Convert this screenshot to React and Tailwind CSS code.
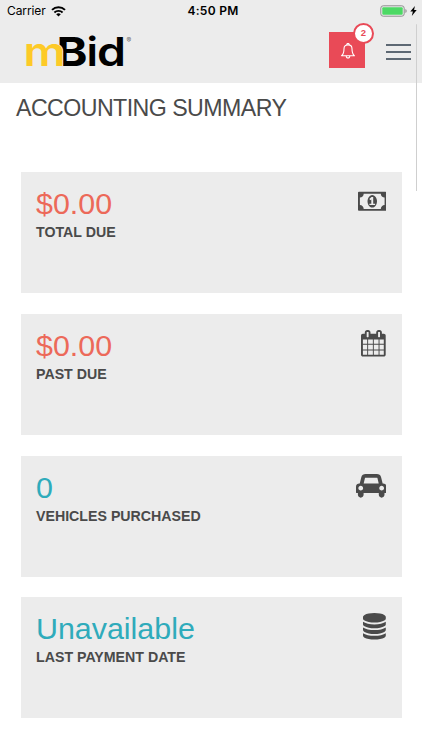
import React from "react";

const icons = {
  money: {
    viewBox: "0 0 1920 1792",
    size: "w-[28.5px] h-[26.6px]",
    path: "M768 1152h384v-96h-128v-448h-114l-148 137 77 80q42-37 55-57h2v288h-128v96zm512-256q0 70-21 142t-59.5 134-101.5 101-138 39-138-39-101.5-101-59.5-134-21-142 21-142 59.5-134 101.5-101 138-39 138 39 101.5 101 59.5 134 21 142zm512 256v-512q-106 0-181-75t-75-181h-1152q0 106-75 181t-181 75v512q106 0 181 75t75 181h1152q0-106 75-181t181-75zm128-832v1152q0 26-19 45t-45 19h-1792q-26 0-45-19t-19-45v-1152q0-26 19-45t45-19h1792q26 0 45 19t19 45z",
  },
  calendar: {
    viewBox: "64 0 1664 1792",
    size: "w-[24.7px] h-[26.6px]",
    path: "M192 1664h288v-288h-288v288zm352 0h320v-288h-320v288zm-352-352h288v-320h-288v320zm352 0h320v-320h-320v320zm-352-384h288v-288h-288v288zm736 736h320v-288h-320v288zm-384-736h320v-288h-320v288zm768 736h288v-288h-288v288zm-384-352h320v-320h-320v320zm-352-864v-288q0-13-9.5-22.5t-22.5-9.5h-64q-13 0-22.5 9.5t-9.5 22.5v288q0 13 9.5 22.5t22.5 9.5h64q13 0 22.5-9.5t9.5-22.5zm736 864h288v-320h-288v320zm-384-384h320v-288h-320v288zm384 0h288v-288h-288v288zm32-480v-288q0-13-9.5-22.5t-22.5-9.5h-64q-13 0-22.5 9.5t-9.5 22.5v288q0 13 9.5 22.5t22.5 9.5h64q13 0 22.5-9.5t9.5-22.5zm384-64v1280q0 52-38 90t-90 38h-1408q-52 0-90-38t-38-90v-1280q0-52 38-90t90-38h128v-96q0-66 47-113t113-47h64q66 0 113 47t47 113v96h384v-96q0-66 47-113t113-47h64q66 0 113 47t47 113v96h128q52 0 90 38t38 90z",
  },
  car: {
    viewBox: "0 0 2048 1792",
    size: "w-[30.4px] h-[26.6px]",
    path: "M480 1088q0-66-47-113t-113-47-113 47-47 113 47 113 113 47 113-47 47-113zm36-320h1016l-89-357q-2-8-14-17.5t-21-9.5h-768q-9 0-21 9.5t-14 17.5zm1372 320q0-66-47-113t-113-47-113 47-47 113 47 113 113 47 113-47 47-113zm160-96v384q0 14-9 23t-23 9h-96v128q0 80-56 136t-136 56-136-56-56-136v-128h-1024v128q0 80-56 136t-136 56-136-56-56-136v-128h-96q-14 0-23-9t-9-23v-384q0-93 65.5-158.5t158.5-65.5h28l105-419q23-94 104-157.5t179-63.5h768q98 0 179 63.5t104 157.5l105 419h28q93 0 158.5 65.5t65.5 158.5z",
  },
  database: {
    viewBox: "128 0 1536 1792",
    size: "w-[22.8px] h-[26.6px]",
    path: "M896 768q237 0 443-43t325-127v170q0 69-103 128t-280 93.5-385 34.5-385-34.5-280-93.5-103-128v-170q119 84 325 127t443 43zm0 768q237 0 443-43t325-127v170q0 69-103 128t-280 93.5-385 34.5-385-34.5-280-93.5-103-128v-170q119 84 325 127t443 43zm0-384q237 0 443-43t325-127v170q0 69-103 128t-280 93.5-385 34.5-385-34.5-280-93.5-103-128v-170q119 84 325 127t443 43zm0-1152q208 0 385 34.5t280 93.5 103 128v128q0 69-103 128t-280 93.5-385 34.5-385-34.5-280-93.5-103-128v-128q0-69 103-128t280-93.5 385-34.5z",
  },
};

const cards = [
  { value: "$0.00", label: "TOTAL DUE", icon: "money", color: "text-[#ec6959]" },
  { value: "$0.00", label: "PAST DUE", icon: "calendar", color: "text-[#ec6959]" },
  { value: "0", label: "VEHICLES PURCHASED", icon: "car", color: "text-[#2fabbb]" },
  { value: "Unavailable", label: "LAST PAYMENT DATE", icon: "database", color: "text-[#2fabbb]" },
];

const StatusBar = () => (
  <div className="grid grid-cols-3 items-center h-[22px] pl-[7px] pr-[5px] font-['Inter'] text-black">
    <div className="flex items-center gap-[5px]">
      <span className="text-[12px] leading-[22px] tracking-[-0.1px]">Carrier</span>
      <svg className="w-[15px] h-[11px]" viewBox="0 0 15 11" fill="none" stroke="currentColor">
        <path d="M1 3.9a9.3 9.3 0 0 1 13 0" strokeWidth="2" />
        <path d="M3.4 6.5a5.9 5.9 0 0 1 8.2 0" strokeWidth="1.9" />
        <path d="M7.5 10.6 5.2 8.3a3.3 3.3 0 0 1 4.6 0z" fill="currentColor" stroke="none" />
      </svg>
    </div>
    <span className="pl-[2px] text-center text-[12px] leading-[22px] font-semibold tracking-[0.3px]">4:50 PM</span>
    <div className="flex items-center justify-end gap-[3px]">
      <svg className="w-[27px] h-[12px]" viewBox="0 0 27 12">
        <rect x="0.8" y="0.8" width="23.4" height="10.4" rx="2.4" fill="none" stroke="#8f8f8f" />
        <rect x="2.3" y="2.2" width="20.4" height="7.6" rx="1" fill="#4cd964" />
        <path d="M25.4 4v4q1.3-.6 1.3-2t-1.3-2z" fill="#8f8f8f" />
      </svg>
      <svg className="w-[7px] h-[10px]" viewBox="0 0 7 10">
        <path d="M4.9 0 .3 5.6h2.6L1.8 10l4.9-5.9H4.1z" fill="#000" />
      </svg>
    </div>
  </div>
);

const Logo = () => (
  <svg className="w-[110px] h-[36px] overflow-visible" viewBox="24 34 110 36" fontFamily="Inter, sans-serif" fontWeight="600" fontSize="40">
    <text x="56.5" y="66" fontWeight="700" textLength="31" lengthAdjust="spacingAndGlyphs">B</text>
    {/* The m sits over the B, separated by a thin gap */}
    <text x="23.5" y="66" fill="#fdca27" stroke="#ececec" strokeWidth="1.2" paintOrder="stroke" textLength="42" lengthAdjust="spacingAndGlyphs">m</text>
    <text x="86.5" y="66" textLength="11.5" lengthAdjust="spacingAndGlyphs">i</text>
    <text x="97" y="66" textLength="29" lengthAdjust="spacingAndGlyphs">d</text>
    <text x="126.5" y="42.5" fontSize="7" fontWeight="400" fill="#666">®</text>
  </svg>
);

const Header = () => (
  <header className="h-[83px] bg-[#ececec]">
    <StatusBar />
    <div className="flex pl-6 pr-[11px] pt-3">
      <Logo />
      <div className="relative ml-auto mt-[-2px] flex h-9 w-9 items-center justify-center bg-[#e94a57]">
        <svg className="mt-px ml-[2px] w-[14px] h-[16px]" viewBox="0 0 14 16" fill="none" stroke="#fff" strokeWidth="1.1" strokeLinejoin="round">
          <path d="M5.9 1.9a1.15 1.15 0 1 1 2.2 0" />
          <path d="M7 1.9C4.4 1.9 3 3.5 3 5.7c0 3.8-.6 5.5-2.4 7h12.8c-1.8-1.5-2.4-3.2-2.4-7C11 3.5 9.6 1.9 7 1.9z" />
          <path d="M5.3 12.9a1.75 1.75 0 1 0 3.4 0" />
        </svg>
        <span className="absolute left-[24px] top-[-9px] flex h-[21px] w-[21px] items-center justify-center rounded-full border-2 border-[#e94a57] bg-white font-['Liberation_Sans'] text-[9.5px] font-bold text-[#e94a57]">
          2
        </span>
      </div>
      <div className="ml-[21px] mt-[10px] flex w-[25px] flex-col gap-[5px]">
        <div className="h-[2px] bg-[#5d6873]"></div>
        <div className="h-[2px] bg-[#5d6873]"></div>
        <div className="h-[2px] bg-[#5d6873]"></div>
      </div>
    </div>
  </header>
);

const Card = ({ value, label, icon, color }) => (
  <div className="flex h-[121px] justify-between bg-[#ececec] px-[15.5px] pt-[15px]">
    <div>
      <div className={`text-[30.4px] leading-[33px] ${color}`}>{value}</div>
      <div className="mt-[2px] text-[14.2px] leading-5 font-bold whitespace-nowrap">{label}</div>
    </div>
    <svg className={`mt-px ${icons[icon].size}`} viewBox={icons[icon].viewBox} fill="currentColor">
      <path d={icons[icon].path} />
    </svg>
  </div>
);

const App = () => {
  return (
    <div className="relative h-[750px] w-[422px] overflow-hidden bg-white font-['Liberation_Sans',sans-serif] text-[#4a4a4a]">
      <Header />
      <main>
        <h1 className="pl-4 pt-[10px] text-[23.2px] leading-[30px] tracking-[-0.56px] whitespace-nowrap">ACCOUNTING SUMMARY</h1>
        <div className="flex flex-col gap-[20.6px] px-[20.5px] pt-[49.4px]">
          {cards.map((card) => (
            <Card key={card.label} {...card} />
          ))}
        </div>
      </main>
      {/* Scroll indicator */}
      <div className="absolute left-[416px] top-6 h-[167px] w-px rounded-full bg-[#cfcfcf]"></div>
    </div>
  );
};

export default App;
